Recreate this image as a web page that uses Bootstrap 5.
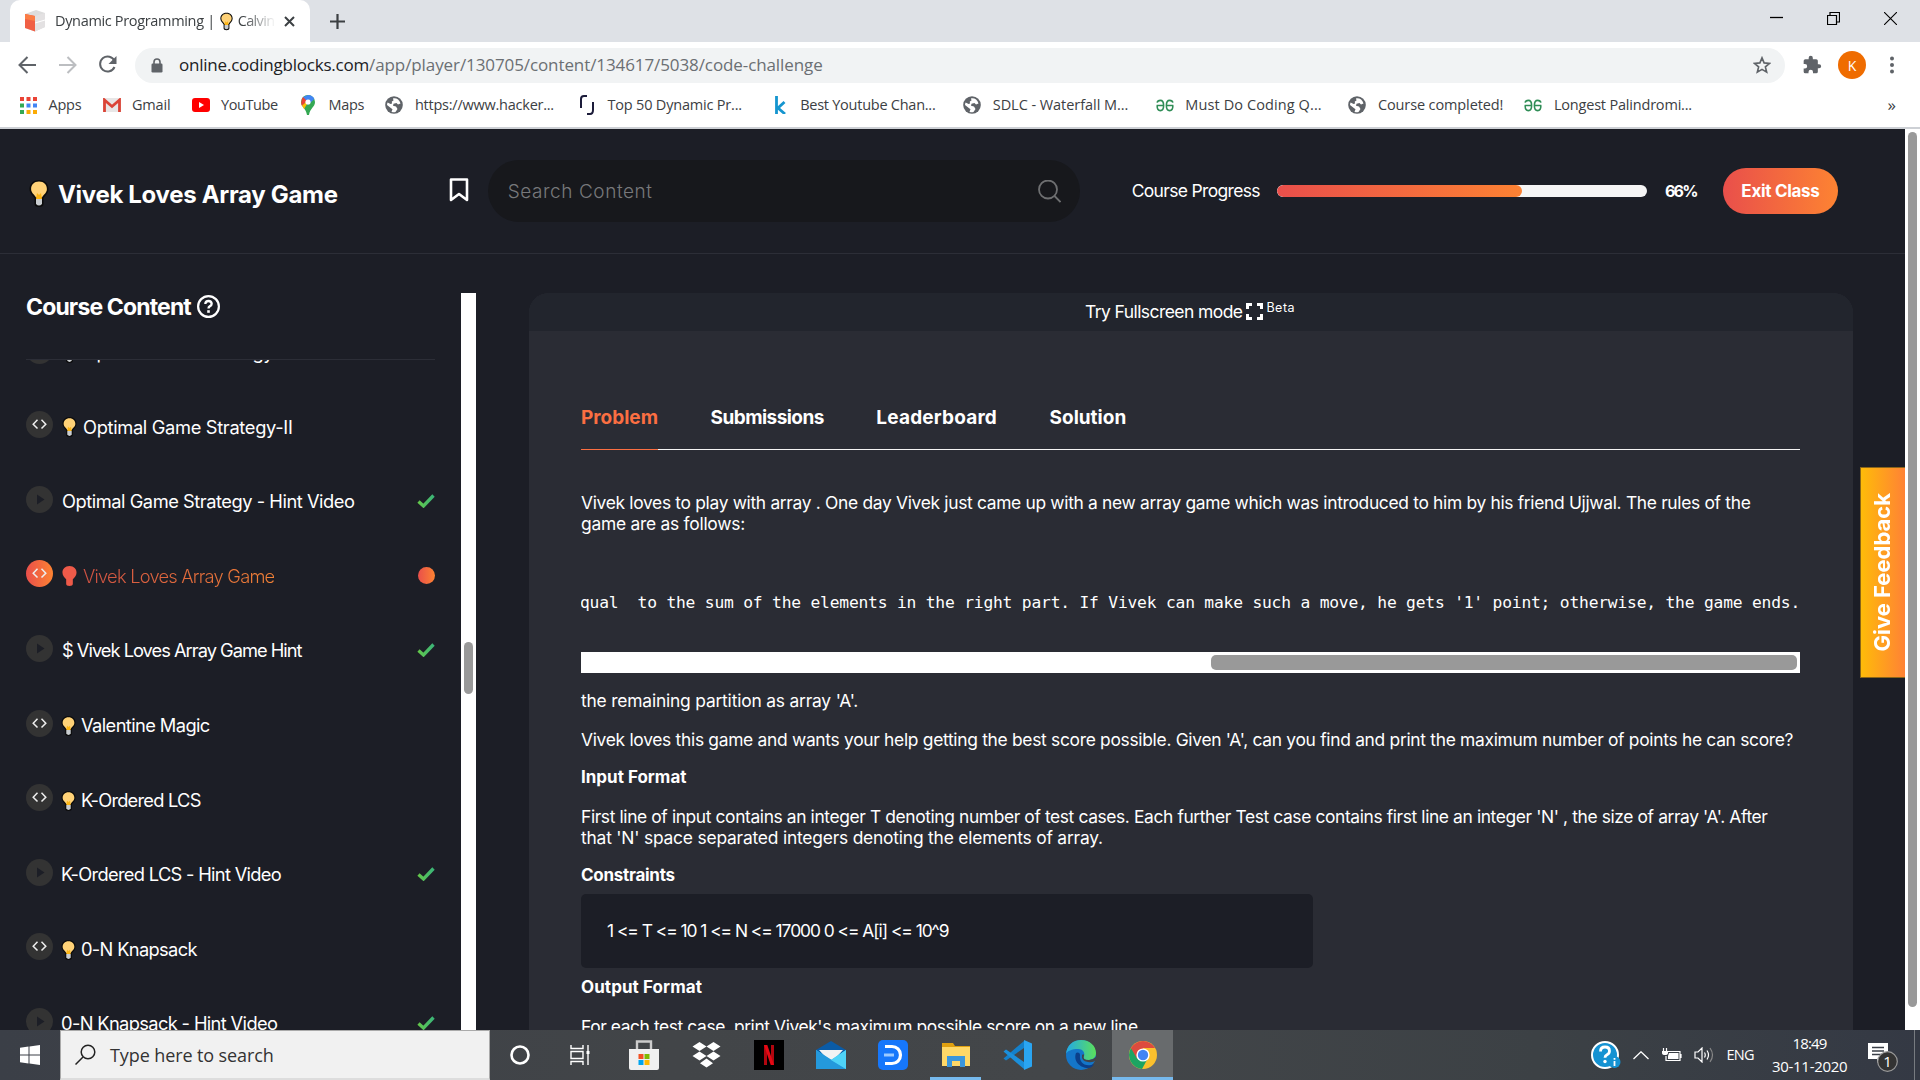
<!DOCTYPE html>
<html lang="en">
<head>
<meta charset="utf-8">
<title>Vivek Loves Array Game</title>
<link rel="stylesheet" href="https://cdn.jsdelivr.net/npm/bootstrap@5.3.0/dist/css/bootstrap.min.css">
<style>
html,body{height:1080px;overflow:hidden}
body{width:1920px;background:#1c1e26;font-family:Inter,"Open Sans",sans-serif;color:#fff}
svg{display:block;flex:none}
[data-w]{display:inline-block;white-space:pre;flex:none}
.ui{font-family:"Open Sans","Noto Sans",sans-serif;color:#3c4043}
.tabstrip{height:42px;background:#dee1e6}
.tab{width:300px;margin-left:10px;height:42px;background:#fff;border-radius:10px 10px 0 0;padding-left:15px}
.tab-title{font-size:14.5px;width:221px;margin-left:9px;-webkit-mask-image:linear-gradient(90deg,#000 85%,transparent)}
.tab-title svg{margin:0 5px}
.newtab{margin-left:20px}
.winctl{padding:0 23px 6px 0;gap:44px}
.toolbar{height:46px;background:#fff;padding-left:17px}
.pill{width:1650px;height:35px;background:#f1f3f4;border-radius:18px;padding:0 14px 0 16px}
.url{font-size:17px;color:#202124}
.url-path{color:#6b6f73}
.bookmarks{height:41px;background:#fff;border-bottom:2px solid #cdd0d5;padding:0 0 5px 18px;font-size:14.5px}
.bm{gap:10.5px;margin-right:20.2px}
.bm-wide{width:192.6px;margin-right:0}
.ico{width:20px;display:flex;justify-content:center;flex:none}
.avatar{width:28px;height:28px;background:#ef6c00;color:#fff;font-size:14px;margin-left:16px}
.more{margin-right:24px;font-size:17px}
.page{height:901px}
.app{width:1905px;height:901px}
.topbar{height:125px;border-bottom:1px solid #2c2e37;padding-left:28px}
.title{font-size:24px;font-weight:700;line-height:30px;margin:0 0 0 8px;padding-top:8px}
.mark-ico{margin:-2px 0 0 111px}
.search{width:592px;height:62px;border-radius:31px;background:#17181c;padding:0 19px 0 20px;margin-left:19px}
.search span{font-size:19px;font-weight:300;color:#77787b;padding-top:2px}
.bar{width:370px;height:12px;border-radius:6px;background:#f5f5f5;margin-left:17px}
.bar .progress-bar{border-radius:6px;background:linear-gradient(90deg,#e94f4b,#fc8233)}
.cp{margin-left:52px;font-size:17.5px}
.pct{margin-left:18px;font-size:16px;font-weight:700}
.exit{width:115px;height:46px;border-radius:23px;background:linear-gradient(90deg,#e94f4b,#fd8332);font-size:17px;font-weight:700;margin-left:26px;padding-top:2px}
.side{width:461px;padding:39px 26px 0}
.side h2{font-size:23px;font-weight:700;line-height:29px;height:66px;margin:0}
.help{margin:2px 0 0 6px}
.lessons{height:671px;border-top:1px solid #2c2e37;overflow:hidden}
.lessons ul{margin:-47px 0 0;padding:0;list-style:none}
.lesson{height:74.55px;font-size:18.3px}
.lesson .dot{width:27px;height:27px;border-radius:50%;background:#333;flex:none}
.lesson .name{margin:5px 0 0 9px}
.lesson.low .name{margin:6px 0 0 8px}
.lesson .name svg{margin-right:6px}
.lesson.low .name svg{margin-right:5px}
.lesson .state{padding-top:3px}
.lesson.active .dot,.now{background:linear-gradient(90deg,#e94f4b,#fd8332)}
.lesson.active .name span{background:linear-gradient(90deg,#cf5143,#f28136);-webkit-background-clip:text;color:transparent;font-weight:300}
.now{width:17px;height:17px;border-radius:50%}
.vscroll{width:15px;background:#fff;padding:3px 3px 0}
.sidescroll{height:737px;margin-top:39px;padding-top:349px}
.thumb{background:#999;border-radius:5px}
.panel{width:1324px;height:737px;margin:39px 0 0 53px;background:#2a2c34;border-radius:20px 20px 0 0;overflow:hidden}
.full{height:38px;background:#22252d;font-size:17.5px;padding-left:556px}
.full svg{margin:-1px 3px 0 4px}
.full sup{font-size:12.5px;top:-4px}
.content{width:1219px;margin-left:52px;padding-top:71px;font-size:17.4px;line-height:21px}
.tabs{height:48px;border-bottom:1px solid #f4f4f4;font-weight:700;font-size:19px;line-height:31px;margin-bottom:42px;gap:52.5px}
.tabs div{height:48px}
.tabs .on{color:#fb6f42;border-bottom:1px solid #fb6f42}
.content p{margin:0 0 17.4px}
.content p.h{font-weight:700;font-size:17px}
.code{font:16.3px/21px "DejaVu Sans Mono",monospace;height:101px;margin-top:6px;padding-top:41px;overflow:hidden;direction:rtl}
.code span{direction:ltr}
.hscroll{height:21px;background:#fff;padding:3px 3px 3px 630px;margin:0 0 17px}
.box{width:732px;height:74px;background:#1c1e26;border-radius:5px;margin:-9px 0 9px;padding:26px}
.feedback{position:absolute;left:1860px;top:467px;width:45px;height:211px;background:linear-gradient(90deg,#ffbb09,#ff8235);border:1px solid #8a6519;border-right:0;padding-right:2px}
.feedback span{writing-mode:vertical-rl;transform:rotate(180deg);font-size:22px;font-weight:700;line-height:1}
.taskbar{height:50px;background:linear-gradient(90deg,#3b3f47,#424548 35%,#434649 55%,#3c4145 80%,#343944)}
.find{width:430px;height:50px;background:#f1f1f1;border:1px solid #aaa;border-bottom:2px solid #ddd;padding-left:14px}
.find span{font-size:18px;color:#333;margin-left:14px;padding-top:2px}
.slot{width:62px;height:50px;flex:none;display:flex;align-items:center;justify-content:center}
.slot.s60{width:60px}
.slot.s68{width:68px}
.slot.s56{width:56px}
.slot.open{width:51px;border-bottom:3px solid #76b9ed;padding-top:3px;margin-left:6px}
.slot.vs{width:72px}
.slot.lit{background:#686b6d;width:61px;margin-left:3px}
.tray{gap:12px}
.lang{font-size:14.5px}
.clock{font-size:15px;line-height:23px;width:75px;margin-left:6px}
.note{margin:2px 2px 0 9px}
.desk{width:6px;height:50px;border-left:1px solid #777b80}
</style>
<script src="https://cdn.jsdelivr.net/npm/bootstrap@5.3.0/dist/js/bootstrap.bundle.min.js"></script>
</head>
<body class="d-flex flex-column position-relative">
<svg width="0" height="0" class="position-absolute">
<defs>
<linearGradient id="gr"><stop stop-color="#63c84b"/><stop offset="1" stop-color="#3bb578"/></linearGradient>
<linearGradient id="edge" x1="0" y1="0" x2="1" y2="0"><stop stop-color="#22a8e8"/><stop offset="1" stop-color="#5be05b"/></linearGradient>
</defs>
<symbol id="bulb" viewBox="0 0 20 27"><path d="M10 0C4 0 .5 4 .5 9c0 4 3 6.500 5 9v6q0 3 4.500 3t4.500-3v-6c2-2.500 5-5 5-9C19.500 4 16 0 10 0z" fill="#0b0b0b"/><path d="M10 1.600C5 1.600 2.100 5 2.100 9c0 4 3.500 5.500 4.900 8.500h6c1.400-3 4.900-4.500 4.900-8.500 0-4-2.900-7.400-7.900-7.400z" fill="#ffd277"/><path d="M8 13l-1 6h6l-1-6-2 2z" fill="#fcb514"/><path d="M7 19h6v5q-3 3-6 0z" fill="#c9cdd0"/></symbol>
<symbol id="bulbred" viewBox="0 0 20 27"><path d="M10 0C4 0 .5 4 .5 9c0 4 3 6.500 5 9v6q0 3 4.500 3t4.500-3v-6c2-2.500 5-5 5-9C19.500 4 16 0 10 0z" fill="#ee5a49"/></symbol>
<symbol id="angle" viewBox="0 0 27 27"><path d="M11.500 8.800L7.200 13.200l4.300 4.400M15.500 8.800l4.300 4.400-4.300 4.400" fill="none" stroke="#eee" stroke-width="1.500"/></symbol>
<symbol id="play" viewBox="0 0 27 27"><path d="M11 8.500l7.500 5-7.500 5z" fill="#1c1e26"/></symbol>
<symbol id="check" viewBox="0 0 18 14"><path d="M1.500 7.500l5 4.500L16.500 1.500" fill="none" stroke="url(#gr)" stroke-width="3.300"/></symbol>
<symbol id="globe" viewBox="0 0 18 18"><circle cx="9" cy="9" r="8.800" fill="#5f6368"/><path d="M8 2.500c3-.7 6.500 1 7.500 5l-2.500 1-1.500-1.500-3 .8-.5 2 3 .7 1.500 2.500-2 3q-2 .7-4-.2l1-2.500-2-1.500L2 9q0-1.500.6-2.500l3 1.500 1.400-.500-.2-2 1.700-1z" fill="#fff"/></symbol>
<symbol id="gg" viewBox="0 0 20 14"><path d="M1 7h7.500M11.500 7h7.500M1.500 4Q2 1.500 5 1.500q3.500 0 3.500 5.500T5 12.500Q1.500 12.500 1.500 7M18.500 4Q18 1.500 15 1.500q-3.500 0-3.500 5.500t3.500 5.500q3.500 0 3.500-5.500" fill="none" stroke="#2f8d56" stroke-width="1.700"/></symbol>
</svg>

<header class="ui">
 <div class="tabstrip d-flex align-items-center">
  <div class="tab d-flex align-items-center">
   <svg width="21" height="22" viewBox="0 0 21 22"><path d="M0 4l11-4 9 3v14l-10 4.500L0 18z" fill="#ddd"/><path d="M0 4l10 2v15.500L0 18z" fill="#f05f45"/><path d="M0 4l10 2v5L0 9z" fill="#fb7d45"/><path d="M10 6l10-3v14l-10 4.500z" fill="#e3e1e2"/><path d="M10 13l10-3" stroke="#fff"/></svg>
   <div class="tab-title d-flex align-items-center overflow-hidden"><span data-w="160">Dynamic Programming |</span><svg width="13" height="19"><use href="#bulb"/></svg><span data-w="37">Calvin</span></div>
   <svg width="11" height="11" class="ms-2" viewBox="0 0 11 11"><path d="M1 1l9 9M10 1l-9 9" stroke="#3c4043" stroke-width="2"/></svg>
  </div>
  <svg class="newtab" width="15" height="15" viewBox="0 0 15 15"><path d="M7.500 0v15M0 7.500h15" stroke="#3c4043" stroke-width="2.200"/></svg>
  <div class="winctl ms-auto d-flex align-items-center">
   <svg width="13" height="13"><path d="M0 5.500h13" stroke="#000" stroke-width="1.300"/></svg>
   <svg width="13" height="13" viewBox="0 0 13 13"><path d="M.5 3.500h9v9h-9zM3 3V.500h9.500V10H10" fill="none" stroke="#000" stroke-width="1.200"/></svg>
   <svg width="13" height="13" viewBox="0 0 13 13"><path d="M0 0l13 13M13 0L0 13" stroke="#000" stroke-width="1.100"/></svg>
  </div>
 </div>
 <div class="toolbar d-flex align-items-center">
  <svg width="118" height="24" viewBox="0 0 118 24" fill="none"><path d="M19 12H3M10.500 4L2.500 12l8 8" stroke="#5f6368" stroke-width="2"/><path d="M42 12h16M50.500 4l8 8-8 8" stroke="#bcbec1" stroke-width="2"/><path d="M97.500 8A7.500 7.500 0 1 0 97.500 14" stroke="#5f6368" stroke-width="2"/><path d="M99.500 3v8h-8z" fill="#5f6368"/></svg>
  <div class="pill d-flex align-items-center">
   <svg width="12" height="15" viewBox="0 0 12 15"><path d="M3 6V4a3 3 0 0 1 6 0v2" fill="none" stroke="#5f6368" stroke-width="1.600"/><rect x=".5" y="5.500" width="11" height="9" rx="1.200" fill="#5f6368"/></svg>
   <span class="url ms-3" data-w="190">online.codingblocks.com</span><span class="url url-path" data-w="454">/app/player/130705/content/134617/5038/code-challenge</span>
   <svg class="ms-auto" width="18" height="18" viewBox="0 0 24 24"><path d="M12 2.500l2.800 6.700 7.200.600-5.500 4.700 1.700 7-6.200-3.700-6.200 3.700 1.700-7L2 9.800l7.200-.6z" fill="none" stroke="#5f6368" stroke-width="2.200"/></svg>
  </div>
  <svg width="20" height="20" viewBox="0 0 24 24" style="margin-left:17px"><path d="M20.500 11H19V7a2 2 0 0 0-2-2h-4V3.500a2.500 2.500 0 0 0-5 0V5H4a2 2 0 0 0-2 2v3.800h1.500a2.700 2.700 0 0 1 0 5.400H2V20a2 2 0 0 0 2 2h3.800v-1.500a2.700 2.700 0 0 1 5.400 0V22H17a2 2 0 0 0 2-2v-4h1.500a2.500 2.500 0 0 0 0-5z" fill="#5f6368"/></svg>
  <div class="avatar rounded-circle d-flex align-items-center justify-content-center">K</div>
  <svg width="4" height="18" style="margin-left:24px" fill="#5f6368"><circle cx="2" cy="2.500" r="2"/><circle cx="2" cy="9" r="2"/><circle cx="2" cy="15.500" r="2"/></svg>
 </div>
 <div class="bookmarks d-flex align-items-center">
  <div class="bm d-flex align-items-center"><i class="ico"><svg width="17" height="17"><g fill="#ea4335"><path d="M0 0h4v4H0zM6.500 0h4v4h-4zM13 0h4v4h-4z"/></g><path d="M0 6.500h4v4H0zM0 13h4v4H0z" fill="#34a853"/><path d="M6.500 6.500h4v4h-4zM13 6.500h4v4h-4z" fill="#4285f4"/><path d="M6.500 13h4v4h-4zM13 13h4v4h-4z" fill="#fbab05"/></svg></i><span data-w="33">Apps</span></div>
  <div class="bm d-flex align-items-center"><i class="ico"><svg width="18" height="14" viewBox="0 0 18 14"><path d="M0 0h18v14H0z" fill="#e8e6e6"/><path d="M1.500 14V2L9 8.500 16.500 2v12" fill="none" stroke="#db4437" stroke-width="2.800"/></svg></i><span data-w="38">Gmail</span></div>
  <div class="bm d-flex align-items-center"><i class="ico"><svg width="18" height="14"><rect width="18" height="14" rx="3" fill="#f00"/><path d="M7 4l5 3-5 3z" fill="#fff"/></svg></i><span data-w="57">YouTube</span></div>
  <div class="bm d-flex align-items-center"><i class="ico"><svg width="14" height="20" viewBox="0 0 14 20"><path d="M7 0a7 7 0 0 1 7 7c0 5-5 6-6 13H6C5 13 0 12 0 7a7 7 0 0 1 7-7z" fill="#34a853"/><path d="M7 0a7 7 0 0 1 6.300 4L7 10 2 2z" fill="#4285f4"/><path d="M2 2l4 4-5 5Q-1 6 2 2z" fill="#ea4335"/><path d="M1 10.500L9 4 3 14z" fill="#fbbc04"/><circle cx="7" cy="7" r="2.600" fill="#fff"/></svg></i><span data-w="36">Maps</span></div>
  <div class="bm bm-wide d-flex align-items-center"><i class="ico"><svg width="18" height="18"><use href="#globe"/></svg></i><span data-w="139">https://www.hacker...</span></div>
  <div class="bm bm-wide d-flex align-items-center"><i class="ico"><svg width="16" height="20" viewBox="0 0 16 20" fill="none" stroke="#1c1c3a" stroke-width="2"><path d="M2 13V4q0-3 3-3h3M14 7v8q0 4-3 4H8"/></svg></i><span data-w="134">Top 50 Dynamic Pr...</span></div>
  <div class="bm bm-wide d-flex align-items-center"><i class="ico"><svg width="12" height="18" viewBox="0 0 12 18" fill="none" stroke="#1595cf" stroke-width="2.800"><path d="M2.500 0v18M10.500 6L4 12l7 6"/></svg></i><span data-w="135">Best Youtube Chan...</span></div>
  <div class="bm bm-wide d-flex align-items-center"><i class="ico"><svg width="18" height="18"><use href="#globe"/></svg></i><span data-w="136">SDLC - Waterfall M...</span></div>
  <div class="bm bm-wide d-flex align-items-center"><i class="ico"><svg width="20" height="13"><use href="#gg"/></svg></i><span data-w="136">Must Do Coding Q...</span></div>
  <div class="bm d-flex align-items-center"><i class="ico"><svg width="18" height="18"><use href="#globe"/></svg></i><span data-w="125">Course completed!</span></div>
  <div class="bm d-flex align-items-center"><i class="ico"><svg width="20" height="13"><use href="#gg"/></svg></i><span data-w="138">Longest Palindromi...</span></div>
  <span class="more ms-auto">»</span>
 </div>
</header>

<main class="page d-flex">
 <div class="app">
  <div class="topbar d-flex align-items-center">
   <svg width="22" height="27" class="mt-1"><use href="#bulb"/></svg>
   <h1 class="title"><span data-w="280">Vivek Loves Array Game</span></h1>
   <svg class="mark-ico" width="20" height="24" viewBox="0 0 20 24"><path d="M2 1.500h16v20.500l-8-6-8 6z" fill="none" stroke="#fff" stroke-width="2.600" stroke-linejoin="round"/></svg>
   <div class="search d-flex align-items-center justify-content-between"><span data-w="145">Search Content</span><svg width="23" height="23" viewBox="0 0 23 23" fill="none" stroke="#6e6f71" stroke-width="1.800"><circle cx="10" cy="9.500" r="9"/><path d="M16.500 16l6 6"/></svg></div>
   <span class="cp" data-w="128">Course Progress</span>
   <div class="progress bar"><div class="progress-bar" style="width:66.3%"></div></div>
   <span class="pct" data-w="32">66%</span>
   <div class="exit d-flex align-items-center justify-content-center"><span data-w="78">Exit Class</span></div>
  </div>
  <div class="d-flex">
   <aside class="side">
    <h2 class="d-flex align-items-start"><span data-w="165">Course Content</span><svg class="help" width="23" height="23" viewBox="0 0 23 23" fill="none" stroke="#fff"><circle cx="11.500" cy="11.500" r="10.400" stroke-width="2.200"/><path d="M8.300 9q.2-3 3.200-3t3.200 2.800q0 1.700-2 2.600-1.200.600-1.200 2" stroke-width="2.300"/><path d="M11.500 15.200v2.600" stroke-width="2.600"/></svg></h2>
    <div class="lessons"><ul id="list"></ul></div>
   </aside>
   <div class="vscroll sidescroll"><div class="thumb" style="height:52px"></div></div>
   <section class="panel">
    <div class="full d-flex align-items-center"><span data-w="157">Try Fullscreen mode</span><svg width="17" height="17" viewBox="0 0 17 17" fill="none" stroke="#fff" stroke-width="3"><path d="M1.500 6V1.500H6M11 1.500h4.500V6M15.500 11v4.500H11M6 15.500H1.500V11"/></svg><sup data-w="29">Beta</sup></div>
    <div class="content">
     <nav class="tabs d-flex"><div class="on" data-w="77">Problem</div><div data-w="113">Submissions</div><div data-w="121">Leaderboard</div><div data-w="77">Solution</div></nav>
     <p><span data-w="1169">Vivek loves to play with array . One day Vivek just came up with a new array game which was introduced to him by his friend Ujjwal. The rules of the</span><br><span data-w="164">game are as follows:</span></p>
     <div class="code"><span data-w="1230">equal  to the sum of the elements in the right part. If Vivek can make such a move, he gets '1' point; otherwise, the game ends.</span></div>
     <div class="hscroll"><div class="thumb h-100"></div></div>
     <p><span data-w="277">the remaining partition as array 'A'.</span></p>
     <p><span data-w="1212">Vivek loves this game and wants your help getting the best score possible. Given 'A', can you find and print the maximum number of points he can score?</span></p>
     <p class="h"><span data-w="105">Input Format</span></p>
     <p><span data-w="1186">First line of input contains an integer T denoting number of test cases. Each further Test case contains first line an integer 'N' , the size of array 'A'. After</span><br><span data-w="522">that 'N' space separated integers denoting the elements of array.</span></p>
     <p class="h"><span data-w="94">Constraints</span></p>
     <div class="box"><span data-w="342">1 &lt;= T &lt;= 10 1 &lt;= N &lt;= 17000 0 &lt;= A[i] &lt;= 10^9</span></div>
     <p class="h"><span data-w="121">Output Format</span></p>
     <p><span data-w="561">For each test case, print Vivek's maximum possible score on a new line.</span></p>
    </div>
   </section>
  </div>
 </div>
 <div class="vscroll"><div class="thumb" style="height:875px"></div></div>
</main>
<div class="feedback d-flex align-items-center justify-content-center"><span data-w="159">Give Feedback</span></div>

<footer class="taskbar ui d-flex align-items-center text-white">
 <div class="slot s60"><svg width="20" height="20" viewBox="0 0 20 20" fill="#fff"><path d="M0 2.800l8.500-1.200v8H0zM9.500 1.400L20 0v9.600H9.500zM0 10.500h8.500v8L0 17.300zM9.500 10.500H20V20L9.500 18.600z"/></svg></div>
 <div class="find d-flex align-items-center"><svg width="21" height="21" viewBox="0 0 21 21" fill="none" stroke="#222" stroke-width="1.500"><circle cx="13" cy="8" r="6.800"/><path d="M8 13l-7.500 7.500"/></svg><span data-w="164">Type here to search</span></div>
 <div class="slot s60"><svg width="20" height="20"><circle cx="10" cy="10" r="8.500" fill="none" stroke="#fff" stroke-width="2.600"/></svg></div>
 <div class="slot s60"><svg width="21" height="20" viewBox="0 0 21 20" fill="none" stroke="#fff" stroke-width="1.400"><path d="M1 0v3.500h12V0M1 6.500h12v7H1zM1 20v-3.500h12V20M18 0v20"/><path d="M16.500 6h3v3h-3z" fill="#fff" stroke="none"/></svg></div>
 <div class="slot s68"><svg width="30" height="30" viewBox="0 0 30 30"><path d="M8 11V1.500h14V11" fill="none" stroke="#ccc" stroke-width="2.400"/><path d="M0 9h30v19q0 2-2 2H2q-2 0-2-2z" fill="#f0f0f0"/><path d="M9.500 14h5v5h-5z" fill="#f25022"/><path d="M15.500 14h5v5h-5z" fill="#7fba00"/><path d="M9.500 20h5v5h-5z" fill="#00a4ef"/><path d="M15.500 20h5v5h-5z" fill="#ffb900"/></svg></div>
 <div class="slot s56"><svg width="29" height="26" viewBox="0 0 29 26" fill="#fff"><path d="M7.500 0l7 4.500-7 4.500-7-4.500zM21.500 0l7 4.500-7 4.500-7-4.500zM7.500 9.500l7 4.500-7 4.500-7-4.500zM21.500 9.500l7 4.500-7 4.500-7-4.500zM14.500 16.500l6.500 4.700-6.500 4.300L8 21.200z"/></svg></div>
 <div class="slot ms-1"><svg width="30" height="30"><path d="M0 0h30v30H0z" fill="#000"/><path d="M10 5h3v20h-3zM17 5h3v20h-3z" fill="#b1060f"/><path d="M10 5h3.300L20 25h-3.300z" fill="#e50914"/></svg></div>
 <div class="slot"><svg width="30" height="28" viewBox="0 0 30 28"><path d="M0 9L15 0l15 9v9H0z" fill="#0a5ba6"/><path d="M3 9h24L15 22z" fill="#f3f3f3"/><path d="M0 9l15 10L30 9v19H0z" fill="#38c0f0"/><path d="M0 9l30 19H0z" fill="#2499dc"/><path d="M15 19L30 9v19z" fill="#4fd3f7"/></svg></div>
 <div class="slot"><svg width="30" height="30"><rect width="30" height="30" rx="5" fill="#1677fb"/><path d="M7 6.500h7a8.500 8.500 0 0 1 0 17H7" fill="none" stroke="#fff" stroke-width="3.200"/><path d="M6 15h10" stroke="#9ccaff" stroke-width="3"/></svg></div>
 <div class="slot open"><svg width="28" height="24" viewBox="0 0 28 24"><path d="M0 0h11l2 3h15v8H0z" fill="#e0a010"/><path d="M0 4h28v19H0z" fill="#ffd867"/><path d="M5 24V13h18v11h-5v-6h-8v6z" fill="#3b96dc"/></svg></div>
 <div class="slot vs"><svg width="30" height="30" viewBox="0 0 30 30"><path d="M22 0l8 3.500v23L22 30z" fill="#2aa5f2"/><path d="M22 1L1.500 18.500l2.500 2L22 8z" fill="#1480ca"/><path d="M22 29L1.500 11.500l2.500-2L22 22z" fill="#1b8fdb"/></svg></div>
 <div class="slot s56"><svg width="30" height="30" viewBox="0 0 30 30"><circle cx="15" cy="15" r="15" fill="#1476c9"/><path d="M0 14C1 5 7 0 15 0c9 0 15 6 15 13 0 5-4 7-8 7s-5-2-4-4 0-7-6-7S1 11 0 14z" fill="url(#edge)"/><path d="M10 13c-3 8 4 15 12 15 3 0 5-2 6-4-9 4-15-2-14-9 0-3-3-3-4-2z" fill="#0b3f8a"/><path d="M16 15q-1 6 6 7 5 1 8-2v-3q-3 3-7 3-7 0-5-4.500 0-2-2-.5z" fill="#424548"/></svg></div>
 <div class="slot open lit"><svg width="28" height="28" viewBox="0 0 28 28"><circle cx="14" cy="14" r="14" fill="#fbc02d"/><path d="M14 14L1.900 7A14 14 0 0 0 13 28l6-11z" fill="#1da462"/><path d="M1.900 7a14 14 0 0 1 24.200 0H14v7l-6 3.500z" fill="#dd4b3e"/><circle cx="14" cy="14" r="6.600" fill="#fff"/><circle cx="14" cy="14" r="5.200" fill="#4285f4"/></svg></div>
 <div class="tray d-flex align-items-center ms-auto h-100">
  <svg width="30" height="30" viewBox="0 0 30 30"><circle cx="14" cy="15" r="13" fill="#1592d2" stroke="#fff" stroke-width="2"/><path d="M9.500 11.500q0-4.500 4.500-4.500t4.500 4q0 2.500-2.500 3.800-2 1-2 3" fill="none" stroke="#fff" stroke-width="2.800"/><circle cx="14" cy="21.500" r="1.700" fill="#fff"/><circle cx="23.500" cy="22" r="6" fill="#1592d2"/><path d="M23.500 21v5M23.500 18v1.800" stroke="#fff" stroke-width="1.800"/></svg>
  <svg width="16" height="9"><path d="M.5 8L8 .8 15.500 8" fill="none" stroke="#fff" stroke-width="1.300"/></svg>
  <svg width="21" height="14" viewBox="0 0 21 14"><path d="M7 3.500h12v9H5V8M20 6v4M2.500 0v3M5.500 0v3" fill="none" stroke="#fff" stroke-width="1.200"/><path d="M1 3h6v2q0 2-3 2t-3-2zM8 5h9.500v6H7V8z" fill="#fff"/></svg>
  <svg width="20" height="16" viewBox="0 0 20 16" fill="none" stroke="#fff" stroke-width="1.200"><path d="M1 5h3l4-4v14l-4-4H1zM10.500 5.500q1.500 2.500 0 5M13 3.500q3 4.500 0 9"/><path d="M16 1q5 7 0 14" stroke="#888"/></svg>
  <span class="lang" data-w="28">ENG</span>
  <div class="clock text-center"><div><span data-w="34">18:49</span></div><div><span data-w="75">30-11-2020</span></div></div>
  <svg class="note" width="32" height="32" viewBox="0 0 32 32"><path d="M0 3h20v16h-8l-3 4v-4H0z" fill="#fff"/><path d="M4 7.500h12M4 11h12M4 14.500h12" stroke="#3a3f47" stroke-width="1.300"/><circle cx="19.500" cy="21.500" r="9.800" fill="#333" stroke="#999" stroke-width="1.200"/><text x="19.500" y="27" font-size="15" font-family="Open Sans" fill="#fff" text-anchor="middle">1</text></svg>
  <div class="desk"></div>
 </div>
</footer>
<script>
// Lesson list: kind, bulb, title, title width, status
const lessons=[["angle",1,"Optimal Game Strategy",190,""],["angle",1,"Optimal Game Strategy-II",209,""],["play",0,"Optimal Game Strategy - Hint Video",292,"done"],["angle",1,"Vivek Loves Array Game",191,"now"],["play",0,"$ Vivek Loves Array Game Hint",240,"done"],["angle",1,"Valentine Magic",129,""],["angle",1,"K-Ordered LCS",120,""],["play",0,"K-Ordered LCS - Hint Video",220,"done"],["angle",1,"0-N Knapsack",116,""],["play",0,"0-N Knapsack - Hint Video",216,"done"]];
document.getElementById("list").innerHTML=lessons.map(([k,b,t,w,s],i)=>`<li class="lesson d-flex align-items-center ${s=="now"?"active":""} ${i>4?"low":""}"><div class="dot"><svg width="27" height="27"><use href="#${k}"/></svg></div><div class="name d-flex align-items-center">${b?`<svg width="15" height="20"><use href="#${s=="now"?"bulbred":"bulb"}"/></svg>`:""}<span data-w="${w}">${t}</span></div><div class="state ms-auto">${s=="done"?'<svg width="18" height="14"><use href="#check"/></svg>':s=="now"?'<div class="now"></div>':""}</div></li>`).join("");
// Track each label so that it fills its slot
document.querySelectorAll("[data-w]").forEach(e=>{const r=e.closest(".feedback")?e.offsetHeight:e.offsetWidth;e.style.letterSpacing=((+e.dataset.w-r)/e.textContent.length)+"px"});
</script>
</body>
</html>
